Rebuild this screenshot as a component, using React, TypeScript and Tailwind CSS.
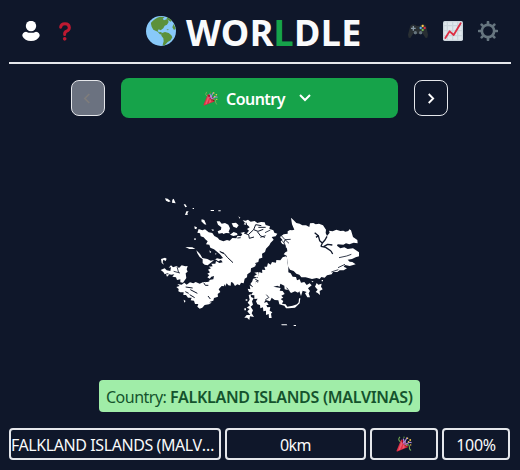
import React from "react";

function Party({ className }: { className: string }) {
  return (
    <svg viewBox="0 0 36 36" className={className}>
      <path fill="#dd2e44" d="M11.6 7.6 1.2 33.2c-.4 1.2.6 2 1.8 1.6l24.5-9.9C26 18 19 9 11.6 7.6Z" />
      <path fill="#ea596e" d="M12 12 5 32l4-1 6-14ZM17 17l-3 12 6-3Z" />
      <ellipse cx="20" cy="17" rx="3" ry="10" transform="rotate(-42 20 17)" fill="#a0041e" />
      <path d="M16 17Q20 12 16 6M20 20q-1-9 5-17" stroke="#aa8dd8" strokeWidth="2.5" fill="none" />
      <path d="M10 13Q3 8 9 2M22 22q8-6 8 2t4 8" stroke="#77b255" strokeWidth="2.3" fill="none" />
      <path d="m21 19 9-5 5 1" stroke="#aa8dd8" strokeWidth="2.5" fill="none" />
      <g fill="#ffcc4d">
        <circle cx="26" cy="5" r="1.8" /><circle cx="32" cy="9" r="2" />
        <circle cx="28" cy="13" r="1.6" /><circle cx="33" cy="20" r="1.6" />
      </g>
      <circle cx="18" cy="3" r="1.7" fill="#5c913b" />
    </svg>
  );
}

function Globe() {
  return (
    <svg viewBox="0 0 90 90" className="size-[30px] shrink-0">
      <circle cx="45" cy="45" r="45" fill="#88c9f9" />
      <path fill="#5c913b" d="M15 20Q28 5 43 2L56 4 50 8 54 13 64 9 68 18 63 26 56 29 52 37 44 43 38 40 35 45 39 49 46 48 48 53 53 55 51 58 41 54 35 47 22 41 17 32 15 24Z" />
      <path fill="#5c913b" d="M48 51 57 48 68 51 76 58 79 64 74 73 65 78 59 85 54 89 50 86 53 76 52 67 46 59ZM63 3 77 12 75 17 69 14 62 9ZM83 24 89 38 84 42 79 34ZM61 39 69 41 65 43Z" />
    </svg>
  );
}

function User() {
  return (
    <svg viewBox="0 0 54 60" className="h-5 w-[18px]">
      <circle cx="27" cy="15" r="15.5" fill="#fff" />
      <path fill="#fff" d="M12 32q15 7 30 0 12 2 11 13-7 15-26 15T1 45q-1-11 11-13Z" />
    </svg>
  );
}

function Gamepad() {
  return (
    <svg viewBox="0 0 60 42" className="h-[14px] w-5">
      <path fill="#292f33" d="m7 5 8-4 8 3 3 2h8l4-3 8-3 8 5 6 27-2 9-5 1-10-15-5 5-5-3h-6l-5 3-5-5L7 42l-5-1-2-9Z" />
      <path d="M16 6v14M9 13h14" stroke="#8899a6" strokeWidth="4" />
      <circle cx="22" cy="26" r="5" fill="#66757f" /><circle cx="38" cy="26" r="5" fill="#66757f" />
      <circle cx="44" cy="6" r="3.5" fill="#ffcc4d" /><circle cx="38" cy="12" r="3.5" fill="#55acee" />
      <circle cx="50" cy="12" r="3.5" fill="#dd2e44" /><circle cx="44" cy="18" r="3.5" fill="#77b255" />
    </svg>
  );
}

function Chart() {
  return (
    <svg viewBox="0 0 60 60" className="size-5">
      <rect width="60" height="60" rx="5" fill="#ccd6dd" />
      <path fill="#e1e8ed" d="M4 4h7v8H4zM15 4h12v8H15zM31 4h11v8H31zM46 4h10v8H46zM4 16h7v11H4zM15 16h12v11H15zM31 16h11v11H31zM46 16h10v11H46zM4 31h7v11H4zM15 31h12v11H15zM31 31h11v11H31zM46 31h10v11H46zM4 46h7v10H4zM15 46h12v10H15zM31 46h11v10H31zM46 46h10v10H46z" />
      <path d="m7 51 13-20 12 11L53 7" fill="none" stroke="#dd2e44" strokeWidth="5.5" strokeLinecap="round" strokeLinejoin="round" />
    </svg>
  );
}

function Gear() {
  return (
    <svg viewBox="0 0 60 60" className="size-5">
      <circle cx="30" cy="30" r="18.5" fill="none" stroke="#66757f" strokeWidth="8" />
      <path d="M30 3v8M30 49v8M3 30h8M49 30h8M11 11l5 5M44 44l5 5M11 49l5-5M44 16l5-5" stroke="#66757f" strokeWidth="8" strokeLinecap="round" />
    </svg>
  );
}

function Islands() {
  return (
    <svg viewBox="0 0 630 420" className="h-[140px] w-[210px]" fill="#fff">
      {/* West Falkland */}
      <path d="M131 117 142 121 150 118 161 127 172 129 178 138 188 143 193 149 205 154 216 150 224 152 232 144 244 145 247 137 258 139 262 132 255 128 268 126 274 132 282 122 276 117 284 112 278 106 266 103 270 98 263 91 272 92 279 89 287 95 299 93 307 99 318 96 329 97 332 105 345 109 343 116 355 121 358 128 367 131 362 139 350 141 356 149 347 158 343 166 333 176 330 186 321 191 322 203 312 206 310 216 301 219 299 230 288 235 287 246 277 253 276 262 269 266 266 280 258 278 254 286 247 283 240 288 234 278 228 276 227 287 220 286 215 280 211 289 200 288 191 298 196 306 188 312 189 320 177 324 175 332 165 335 162 343 149 345 142 353 134 356 127 350 130 342 120 342 117 332 107 331 110 323 99 323 93 315 85 315 86 307 76 307 70 304 71 297 64 291 74 288 67 282 80 284 88 278 95 284 105 277 115 280 122 276 134 281 145 276 157 275 166 269 175 268 177 258 169 260 164 266 157 262 163 256 157 251 165 247 159 239 168 235 161 230 173 229 169 221 181 221 183 213 193 219 203 217 198 210 190 214 181 208 171 215 158 226 149 224 143 219 143 208 134 201 127 190 124 181 135 192 142 204 157 207 167 212 178 210 186 205 196 207 204 204 195 193 186 185 177 178 166 173 163 164 153 163 158 154 151 148 146 142 137 139 135 130 127 128Z" />
      {/* Outlying western islets */}
      <path d="M118 109 126 112 124 118 119 116ZM140 88 148 90 154 104 148 103 139 94ZM185 94 194 94 200 101 210 99 220 104 225 115 221 125 225 130 213 129 205 132 202 129 191 131 188 124 198 119 199 112 189 104ZM230 100 243 98 251 106 245 114 235 110ZM225 134 236 126 246 130 248 135 235 138ZM30 25 38 26 47 34 41 36 33 32ZM52 29 56 26 62 40 51 38ZM86 43 91 43 96 50 91 52ZM90 75 94 64 101 64 97 70 99 74ZM113 54h4v3h-4ZM167 60h10v3h-10ZM190 61h7v3h-7ZM250 79 256 83 254 86ZM91 171 112 172 121 177 103 177ZM163 181 169 186 165 189ZM180 190 185 191 182 194ZM169 118 177 119 174 124ZM118 145h4v5h-4ZM18 207 30 203 35 206 32 213 25 209 23 217 27 224 20 219Z" />
      <path d="M17 240 29 235 35 241 46 243 48 232 41 233 48 226 54 232 65 228 72 234 80 226 91 229 98 228 95 238 98 245 92 250 94 264 84 278 76 277 76 268 66 270 63 262 52 260 58 253 48 254 37 250 29 253 25 246ZM33 253 44 253 36 260ZM86 329 92 333 88 338ZM161 338 170 336 164 343ZM88 289 101 283 111 287 109 294 97 297Z" />
      {/* East Falkland, northern half */}
      <path d="M408 83 416 91 424 99 434 101 442 106 453 106 463 111 465 100 475 99 482 103 492 101 504 106 513 119 512 129 516 138 524 128 522 122 533 124 544 119 556 123 565 122 571 125 580 123 583 118 588 121 594 141 607 150 608 160 596 158 583 163 573 160 565 164 548 163 546 167 556 175 568 172 578 177 594 175 612 187 612 199 602 202 591 207 578 209 584 215 592 216 602 223 584 228 570 225 566 230 576 235 566 241 554 241 547 246 534 246 530 253 516 256 509 263 499 261 494 267 485 264 471 267 452 262 439 262 433 254 424 251 416 243 405 239 397 225 397 209 395 197 386 193 391 187 397 184 396 176 391 171 391 164 382 162 377 155 382 149 375 141 386 133 398 131 398 124 405 120 411 121 418 119 411 103Z" />
      {/* Lafonia */}
      <path d="M393 199 383 202 376 211 364 210 363 218 351 216 347 224 339 219 336 230 328 230 331 240 321 239 322 248 312 247 312 257 302 255 309 262 303 267 310 278 300 274 301 284 293 280 294 292 284 286 286 298 278 296 282 306 294 307 288 315 298 316 298 327 308 326 303 334 307 343 315 345 316 355 324 352 325 364 333 362 333 375 341 372 342 384 350 384 348 371 352 367 344 362 346 351 337 352 334 345 341 345 336 336 327 338 332 330 345 334 350 323 359 330 370 331 373 343 388 347 393 355 401 355 420 353 434 340 436 325 432 325 431 337 426 343 413 347 397 350 392 343 381 341 385 333 377 327 385 323 379 317 389 312 383 303 374 302 377 294 364 292 355 290 367 287 374 290 376 281 388 287 389 298 401 301 408 309 420 304 429 308 433 304 438 318 443 302 455 306 450 310 457 322 465 322 461 310 465 303 459 295 470 286 464 280 455 285 448 276 438 278 434 268 426 271 423 261 413 260 407 250 400 247 400 230 396 219 398 205Z" />
      {/* Small eastern and channel islands */}
      <path d="M281 316 287 312 288 321 296 325 291 334 294 344 287 350 294 361 290 370 297 381 285 379 283 390 276 383 268 383 275 375 286 375 277 364 284 357 275 353 285 346 278 338 284 329ZM286 282 292 274 294 266 306 263 296 259 306 253 298 248 310 246 312 256 305 264 312 270 300 276 304 286 294 290ZM480 290 485 279 490 284 500 281 498 290 503 298 494 303 495 315 488 309 482 306 488 299ZM470 272 476 275 471 277ZM379 403h16l2 3h-17ZM416 405h7v3h-7ZM268 355h5v6h-5ZM272 328h5v4h-5ZM500 270h4v4h-4ZM297 225 304 220 300 230Z" />
      {/* Bays and inlets */}
      <g fill="none" stroke="#0f172a" strokeWidth="4" strokeLinejoin="bevel">
        <path d="M479 128 490 137 483 142M490 137 494 152 502 159 498 169 512 172 528 183M506 170 518 163 532 165M502 159 510 150 516 139M528 183 533 192" />
        <path strokeWidth="2.5" d="M379 137 390 149 407 148M390 149 387 158 394 177M390 149 402 160M387 158 380 151" />
        <path strokeWidth="3" d="M194 184 208 191 217 202 234 218M207 190 197 187M159 318 166 327M127 310 106 299M119 323 104 314M91 305 101 310M139 271 151 275 163 273M92 291 113 294M146 278 151 286 160 286M209 292 209 284M322 220 332 226M311 241 321 247M301 268 311 273" />
        <path strokeWidth="3" d="M247 137 256 126 269 124 277 110M276 110 273 98M256 126 247 120M267 129 280 134 296 119 302 104M296 119 309 124 325 118M302 104 319 107M281 134 283 145 297 141M307 125 317 138 330 142M310 112 332 112M247 144 257 143" />
        <path strokeWidth="2.5" d="M330 128 346 120M316 142 332 137M552 203 575 198 589 193M549 233 570 223M529 246 550 239M66 230 71 248M56 244 75 249M385 320 399 309M395 293 403 304M334 314 342 323M331 329 341 323" />
      </g>
    </svg>
  );
}

const cell = "flex h-8 items-center justify-center rounded border-2 border-gray-200 text-gray-50";

export default function App() {
  return (
    <main className="flex h-[470px] w-[520px] flex-col overflow-hidden bg-[#0f172a] px-[9px] font-['Noto_Sans',sans-serif] text-base text-white">
      <header className="flex h-16 shrink-0 items-center border-b-2 border-gray-200">
        <div className="flex w-[137px] items-center pl-[13px]">
          <User />
          <svg viewBox="0 0 36 56" className="ml-[19px] mt-px h-[19px] w-3">
            <path d="M5 15Q6 5 18 5t13 11q0 8-8 11-7 3-6 10" fill="none" stroke="#be1931" strokeWidth="9" strokeLinecap="round" />
            <circle cx="17" cy="50" r="5.5" fill="#be1931" />
          </svg>
        </div>
        <Globe />
        <h1 className="ml-[10px] flex w-[176px] whitespace-nowrap pt-1 text-[36px] font-bold leading-10 tracking-[0.35px] text-gray-50">
          WOR<span className="text-[#16a34a]">L</span>DLE
        </h1>
        <div className="ml-auto flex items-center gap-[15px] pr-[13px]">
          <Gamepad />
          <Chart />
          <Gear />
        </div>
      </header>
      <nav className="mr-0.5 mt-[14px] flex h-10 shrink-0 items-center justify-center gap-4">
        <button className="flex h-9 w-[34px] items-center justify-center rounded-lg border border-gray-200 bg-[#6b7280]">
          <svg viewBox="0 0 10 14" className="h-[13px] w-[9px]"><path d="M7 2 2 7l5 5" fill="none" stroke="#7f7d7b" strokeWidth="1.8" /></svg>
        </button>
        <button className="flex h-10 w-[277px] items-center justify-center rounded-lg bg-[#16a34a] pr-1 pt-px font-semibold">
          <Party className="mr-2 size-[15px]" />
          <span className="w-[59px] whitespace-nowrap text-left tracking-[-0.55px]">Country</span>
          <svg viewBox="0 0 12 8" className="ml-[14px] mb-0.5 h-2 w-3"><path d="m1 1 5 5 5-5" fill="none" stroke="#fff" strokeWidth="2" /></svg>
        </button>
        <button className="flex h-9 w-[34px] items-center justify-center rounded-lg border border-gray-200">
          <svg viewBox="0 0 10 14" className="h-[13px] w-[9px]"><path d="m3 2 5 5-5 5" fill="none" stroke="#fff" strokeWidth="2" /></svg>
        </button>
      </nav>
      <section className="mt-[72px] flex h-[140px] shrink-0 pl-[146px]">
        <Islands />
      </section>
      <p className="ml-[90px] mt-[50px] flex h-8 w-[321px] shrink-0 items-center whitespace-nowrap rounded bg-[#a0eda8] pl-[7px] pt-0.5 text-[16px] tracking-[-0.5px] text-[#14532d]">
        Country:&nbsp;<b className="font-semibold tracking-[-0.29px]">FALKLAND ISLANDS (MALVINAS)</b>
      </p>
      <div className="mt-4 grid shrink-0 grid-cols-[212px_141px_68px_68px] gap-1">
        <div className={`${cell} overflow-hidden`}>
          <span className="w-full truncate pt-0.5 tracking-[-0.42px]">FALKLAND ISLANDS (MALVINAS)</span>
        </div>
        <div className={`${cell} pt-0.5 tracking-[-0.5px]`}>0km</div>
        <div className={cell}><Party className="size-4" /></div>
        <div className={`${cell} pt-0.5 tracking-[-0.3px]`}>100%</div>
      </div>
    </main>
  );
}
